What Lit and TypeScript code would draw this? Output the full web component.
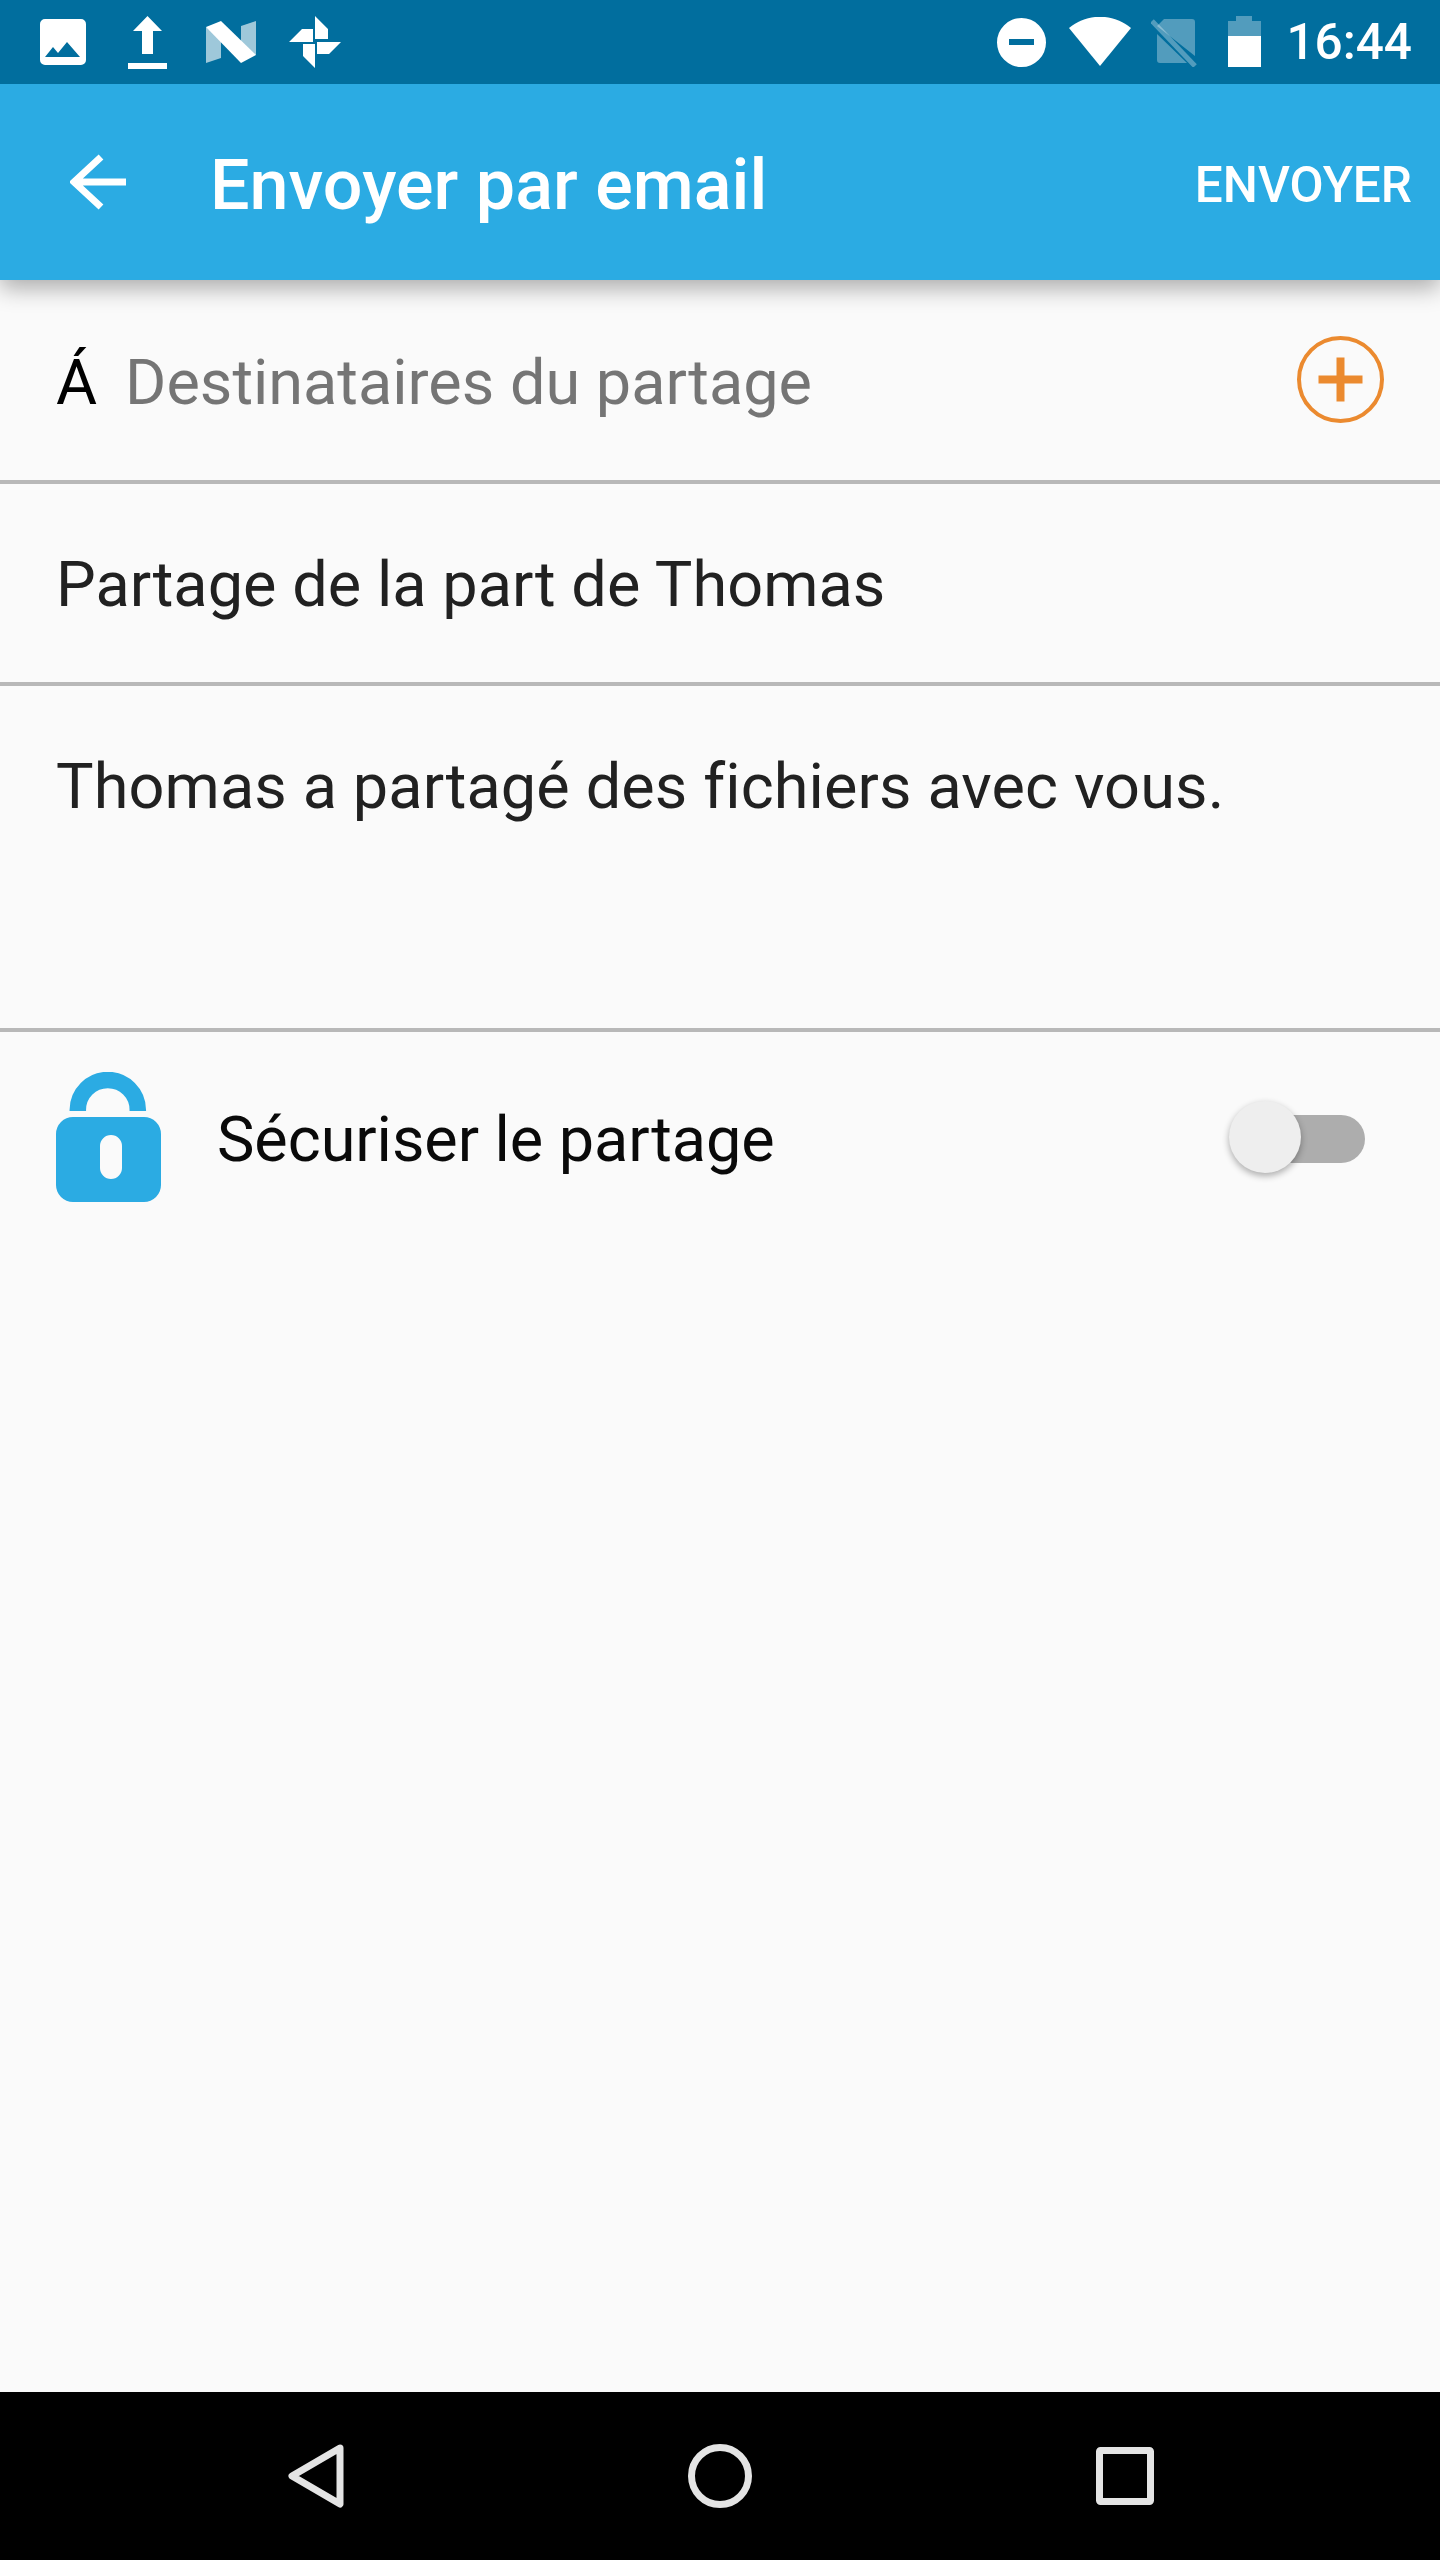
import { LitElement, html, css } from "lit";
import { customElement } from "lit/decorators.js";

@customElement("app-root")
export class AppRoot extends LitElement {
  static styles = css`
    :host { display: flex; flex-direction: column; width: 1440px; height: 2560px; background: #fafafa; font-family: Roboto, "Noto Sans", sans-serif; overflow: hidden; }
    svg { display: block; flex: none; }
    .status { height: 84px; background: #016e9e; display: flex; align-items: flex-start; color: #fff; flex: none; position: relative; z-index: 2; }
    .status .i1 { margin: 19px 0 0 40px; }
    .status .i2 { margin: 16px 0 0 42px; }
    .status .i3 { margin: 21px 0 0 39px; }
    .status .i4 { margin: 16px 0 0 33px; }
    .status .i5 { margin: 18px 0 0 auto; }
    .status .i6 { margin: 17px 0 0 23px; }
    .status .i7 { margin: 19px 0 0 20px; }
    .status .i8 { margin: 16px 0 0 31px; }
    .time { font-size: 49.5px; font-weight: 500; line-height: 84px; margin: 0 28px 0 25px; height: 84px; }
    .bar { height: 196px; background: #2babe3; display: flex; align-items: center; color: #fff; flex: none; box-shadow: 0 8px 22px rgba(0,0,0,.32); position: relative; z-index: 1; }
    .back { margin-left: 70px; }
    .title { font-size: 70px; font-weight: 500; margin-left: 84px; flex: 1; line-height: 196px; padding-top: 6px; letter-spacing: .05px; }
    .action { font-size: 49.5px; font-weight: 500; margin-right: 28px; padding-top: 5px; }
    .row { flex: none; display: flex; align-items: center; border-bottom: 4px solid #b8b8b8; box-sizing: border-box; padding: 0 56px 0 56px; font-size: 63px; color: #212121; }
    .to { height: 204px; }
    .to svg { margin-top: -2px; }
    .subject { height: 202px; padding-top: 2px; letter-spacing: .05px; }
    .body { height: 346px; align-items: flex-start; padding-top: 64px; letter-spacing: .12px; }
    .a { color: #000; font-size: 63px; margin-right: 28px; padding-top: 4px; }
    .ph { color: #757575; flex: 1; padding-top: 4px; }
    .secure { height: 210px; display: flex; align-items: center; padding-left: 56px; flex: none; }
    .secure .label { font-size: 63px; color: #0a0a0a; margin-left: 56px; flex: 1; padding-top: 4px; letter-spacing: -.05px; }
    .switch { width: 136px; height: 72px; position: relative; margin-right: 75px; flex: none; }
    .track { position: absolute; left: 16px; right: 0; top: 14px; height: 48px; border-radius: 24px; background: #adadad; }
    .thumb { position: absolute; left: 0; top: 0; width: 72px; height: 72px; border-radius: 50%; background: #eeeeee; box-shadow: 0 3px 7px rgba(0,0,0,.32); }
    .nav { margin-top: auto; height: 168px; background: #000; flex: none; display: flex; align-items: flex-start; }
    .nav .n1 { margin: 52px 0 0 288px; }
    .nav .n2 { margin: 52px 0 0 344px; }
    .nav .n3 { margin: 55px 0 0 344px; }
  `;

  render() {
    return html`
      <div class="status">
        <svg class="i1" width="46" height="46" viewBox="0 0 46 46"><path fill="#fff" fill-rule="evenodd" d="M5 0h36a5 5 0 0 1 5 5v36a5 5 0 0 1-5 5H5a5 5 0 0 1-5-5V5a5 5 0 0 1 5-5zM5 38h35L27 23l-9 11-5-6z"/></svg>
        <svg class="i2" width="39" height="53" viewBox="0 0 39 53"><path fill="#fff" d="M19.500 0L34 15h-9v23H14V15H5zM0 47h39v6H0z"/></svg>
        <svg class="i3" width="50" height="42" viewBox="0 0 50 42"><path fill="#fff" fill-opacity=".62" d="M0 6l15 7v24L0 42zM35 5l15-5v34l-15-5z"/><path fill="#fff" d="M0 6L15 0l35 34-15 8z"/></svg>
        <svg class="i4" width="52" height="52" viewBox="0 0 52 52"><path fill="#fff" d="M26 0l13 13v10H26zM0 26L13 13h11v13zM14 28h12v24L14 40zM28 26h24L40 38H28z"/></svg>
        <svg class="i5" width="49" height="49" viewBox="0 0 49 49"><path fill="#fff" fill-rule="evenodd" d="M24.500 0a24.500 24.500 0 1 1 0 49a24.500 24.500 0 0 1 0-49zM12 21v6h25v-6z"/></svg>
        <svg class="i6" width="62" height="49" viewBox="0 0 62 49"><path fill="#fff" d="M31 49L0 11C18-4 44-4 62 11z"/></svg>
        <svg class="i7" width="46" height="48" viewBox="0 0 46 48"><path fill="#fff" fill-opacity=".32" d="M13 0h28a3 3 0 0 1 3 3v34L6 7zM6 15l30 29H9a3 3 0 0 1-3-3z"/><path stroke="#fff" stroke-opacity=".32" stroke-width="5" d="M1 2l43 45"/></svg>
        <svg class="i8" width="33" height="51" viewBox="0 0 33 51"><path fill="#fff" fill-opacity=".32" d="M8 0h16v5h9v16H0V5h8z"/><path fill="#fff" d="M0 20h33v31H0z"/></svg>
        <div class="time">16:44</div>
      </div>
      <div class="bar">
        <svg class="back" width="56" height="56" viewBox="0 0 56 56"><path fill="none" stroke="#fff" stroke-width="7" d="M31 3L4 28l27 25M4 28h52"/></svg>
        <div class="title">Envoyer par email</div>
        <div class="action">ENVOYER</div>
      </div>
      <div class="row to">
        <span class="a">Á</span><span class="ph">Destinataires du partage</span>
        <svg width="87" height="87" viewBox="0 0 87 87"><circle cx="43.500" cy="43.500" r="41.500" fill="none" stroke="#eb8a2f" stroke-width="4"/><path stroke="#eb8a2f" stroke-width="8" d="M43.500 21.500v44M21.500 43.500h44"/></svg>
      </div>
      <div class="row subject">Partage de la part de Thomas</div>
      <div class="row body">Thomas a partagé des fichiers avec vous.</div>
      <div class="secure">
        <svg width="105" height="130" viewBox="0 0 105 130"><path fill="none" stroke="#2babe3" stroke-width="16.500" d="M21.800 39V38a30 30 0 0 1 60 0v1"/><path fill="#2babe3" fill-rule="evenodd" d="M17 45h71a17 17 0 0 1 17 17v51a17 17 0 0 1-17 17H17a17 17 0 0 1-17-17V62a17 17 0 0 1 17-17zM55 63a11 11 0 0 0-11 11v22a11 11 0 0 0 22 0V74a11 11 0 0 0-11-11z"/></svg>
        <div class="label">Sécuriser le partage</div>
        <div class="switch"><div class="track"></div><div class="thumb"></div></div>
      </div>
      <div class="nav">
        <svg class="n1" width="56" height="64" viewBox="0 0 56 64"><path fill="none" stroke="#e4e4e4" stroke-width="7" stroke-linejoin="round" d="M52 4L4 32l48 28z"/></svg>
        <svg class="n2" width="64" height="64" viewBox="0 0 64 64"><circle cx="32" cy="32" r="28.500" fill="none" stroke="#e4e4e4" stroke-width="7"/></svg>
        <svg class="n3" width="58" height="58" viewBox="0 0 58 58"><rect x="3.500" y="3.500" width="51" height="51" rx="1" fill="none" stroke="#e4e4e4" stroke-width="7"/></svg>
      </div>
    `;
  }
}
